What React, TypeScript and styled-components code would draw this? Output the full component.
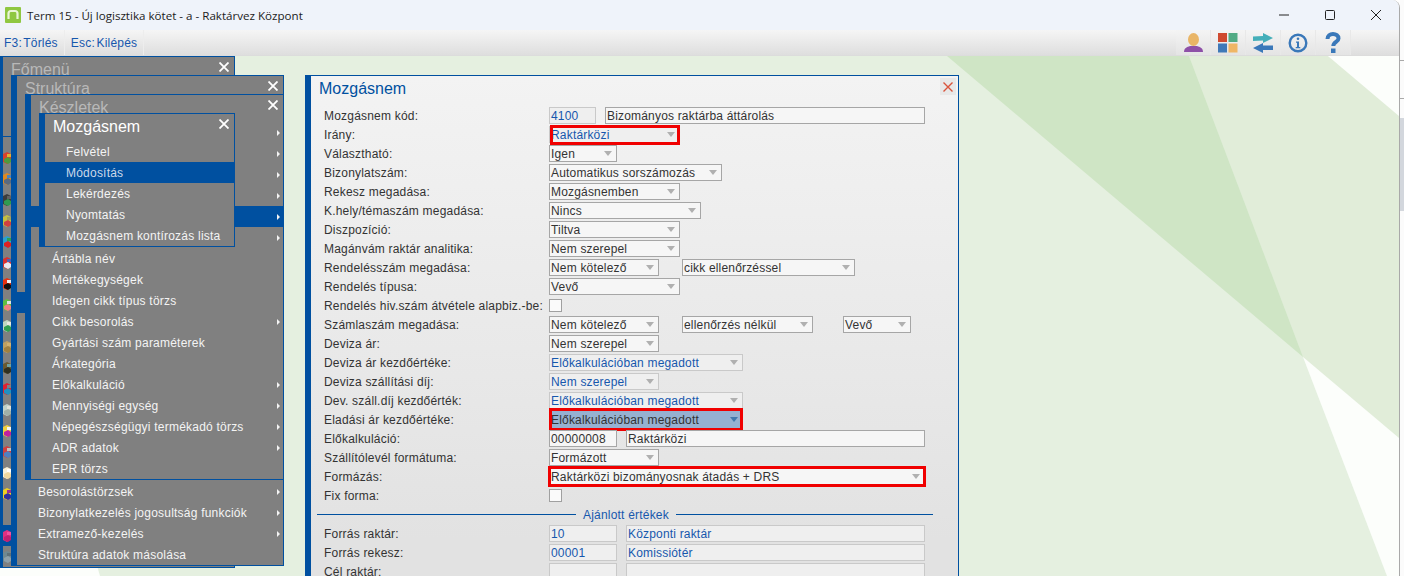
import React from "react";
import styled, { createGlobalStyle } from "styled-components";

const Global = createGlobalStyle`
  html, body { margin: 0; padding: 0; background: #fff; overflow: hidden; }
  * { box-sizing: border-box; }
`;

const BLUE = "#0050a0";

const Page = styled.div`
  display: flex;
  width: 1404px;
  height: 576px;
  overflow: hidden;
  font-family: "Liberation Sans", Arial, sans-serif;
  font-size: 12px;
`;
const AppWindow = styled.div`
  display: flex;
  flex-direction: column;
  width: 1400px;
  height: 576px;
  border-right: 1px solid #a9a9a9;
  border-top-right-radius: 8px;
  overflow: hidden;
`;
const SideStrip = styled.div`
  position: relative;
  flex: 1;
  background: #fbfbfb;
`;
const StripThumb = styled.div`
  position: absolute;
  top: 118px;
  left: 0;
  right: 0;
  height: 93px;
  background: #d3d7dd;
`;
const StripLine = styled.div<{ $top: number }>`
  position: absolute;
  top: ${(p) => p.$top}px;
  left: 0;
  right: 0;
  height: 1px;
  background: #a9a9a9;
`;
const TitleBar = styled.div`
  display: flex;
  align-items: center;
  height: 30px;
  flex: none;
  padding-left: 5px;
  background: #eff3fa;
`;
const TitleText = styled.div`
  margin-left: 6px;
  flex: 1;
  font-family: "Open Sans", sans-serif;
  font-size: 11.6px;
  color: #1c1c1c;
  white-space: nowrap;
`;
const WinButton = styled.div`
  display: flex;
  align-items: center;
  justify-content: center;
  width: 46px;
  height: 30px;
`;
const ToolBar = styled.div`
  display: flex;
  align-items: stretch;
  height: 26px;
  flex: none;
  background: linear-gradient(#f5f5f5, #dedede);
  border-bottom: 1px solid #dcdcdc;
`;
const KeyButton = styled.div<{ $left: number; $right: number }>`
  display: flex;
  align-items: center;
  height: 25px;
  padding: 0 ${(p) => p.$right}px 0 ${(p) => p.$left}px;
  color: #1657ad;
  letter-spacing: 0.2px;
  word-spacing: -2px;
  border-right: 1px solid #ededed;
  white-space: nowrap;
`;
const ToolSpacer = styled.div`
  flex: 1;
`;
const IconButton = styled.div`
  display: flex;
  align-items: center;
  justify-content: center;
  width: 35px;
  height: 25px;
  background: linear-gradient(#f4f4f4, #e4e4e4);
  border-right: 1px solid #e8e8e8;
`;
const ToolEnd = styled.div`
  width: 48px;
`;
const Desktop = styled.div`
  position: relative;
  flex: 1;
  overflow: hidden;
`;
const Backdrop = styled.svg`
  position: absolute;
  inset: 0;
`;

type WinProps = { $x: number; $y: number; $w: number; $h: number };
const MenuWin = styled.div<WinProps>`
  position: absolute;
  left: ${(p) => p.$x}px;
  top: ${(p) => p.$y}px;
  width: ${(p) => p.$w}px;
  height: ${(p) => p.$h}px;
  background: #808080;
  border-top: 1px solid ${BLUE};
  border-right: 1px solid ${BLUE};
  border-bottom: 1px solid ${BLUE};
  border-left: ${(p) => (p.$x === 0 ? 3 : 6)}px solid ${BLUE};
  overflow: hidden;
`;
const MenuHead = styled.div<{ $active?: boolean; $left: number; $h: number }>`
  display: flex;
  justify-content: space-between;
  height: ${(p) => p.$h}px;
  padding-left: ${(p) => p.$left}px;
  font-size: 16px;
  line-height: 25px;
  color: ${(p) => (p.$active ? "#ffffff" : "#b8b8b8")};
`;
const CloseMark = styled.svg<{ $right: number; $top: number }>`
  margin: ${(p) => p.$top}px ${(p) => p.$right}px 0 0;
  flex: none;
`;
const MenuRow = styled.div<{ $selected?: boolean; $left: number }>`
  display: flex;
  align-items: center;
  justify-content: space-between;
  height: 21px;
  padding: 0 3px 0 ${(p) => p.$left}px;
  letter-spacing: 0.22px;
  white-space: nowrap;
  color: ${(p) => (p.$selected ? "#cbd8ea" : "#f4f4f4")};
  background: ${(p) => (p.$selected ? BLUE : "transparent")};
`;
const Chevron = styled.span`
  width: 0;
  height: 0;
  border-left: 3px solid #f4f4f4;
  border-top: 3px solid transparent;
  border-bottom: 3px solid transparent;
`;
const IconColumn = styled.div`
  display: flex;
  flex-direction: column;
  padding-top: 64px;
  width: 8px;
`;
const IconRow = styled.div<{ $selected?: boolean }>`
  display: flex;
  align-items: center;
  height: 21px;
  margin-left: ${(p) => (p.$selected ? -3 : 0)}px;
  padding-left: ${(p) => (p.$selected ? 3 : 0)}px;
  width: ${(p) => (p.$selected ? 11 : 8)}px;
  background: ${(p) => (p.$selected ? BLUE : "transparent")};
`;
const HeadRule = styled.div`
  position: absolute;
  left: 0;
  top: 79px;
  width: 8px;
  height: 1px;
  background: ${BLUE};
`;

const Panel = styled.div`
  position: absolute;
  left: 305px;
  top: 19px;
  width: 654px;
  height: 540px;
  background: linear-gradient(#f3f3f3, #e2e2e2 86%);
  border-top: 1px solid ${BLUE};
  border-right: 1px solid ${BLUE};
  border-left: 6px solid ${BLUE};
`;
const PanelHead = styled.div`
  display: flex;
  justify-content: space-between;
  height: 30px;
  padding-left: 8px;
  font-size: 16px;
  line-height: 25px;
  color: ${BLUE};
`;
const PanelClose = styled.div`
  display: flex;
  align-items: center;
  justify-content: center;
  width: 16px;
  height: 17px;
  margin: 2px 2px 0 0;
  background: #e8e8e8;
`;
const FormBody = styled.div`
  display: flex;
  flex-direction: column;
  padding-left: 13px;
`;
const FormRow = styled.div`
  display: flex;
  align-items: center;
  height: 19px;
  flex: none;
`;
const Label = styled.div`
  width: 225px;
  flex: none;
  color: #333;
  letter-spacing: 0.2px;
  white-space: nowrap;
`;
type BoxProps = { $w: number; $ml?: number; $ro?: boolean };
const BoxBase = styled.div<BoxProps>`
  position: relative;
  display: flex;
  align-items: center;
  flex: none;
  width: ${(p) => p.$w}px;
  height: 17px;
  margin-left: ${(p) => p.$ml ?? 0}px;
  padding-left: 1px;
  letter-spacing: 0.18px;
  white-space: nowrap;
  color: ${(p) => (p.$ro ? "#1657ad" : "#333")};
  background: ${(p) => (p.$ro ? "#efefef" : "#f6f6f6")};
  border: 1px solid ${(p) => (p.$ro ? "#c9c9c9" : "#a6a6a6")};
`;
const Caret = styled.span<{ $active?: boolean }>`
  position: absolute;
  right: 4px;
  top: 5px;
  width: 0;
  height: 0;
  border-left: 4px solid transparent;
  border-right: 4px solid transparent;
  border-top: 5px solid ${(p) => (p.$active ? "#4479ad" : "#b0b0b0")};
`;
const Highlight = styled.span`
  position: absolute;
  inset: -1px;
  left: 1px;
  right: 1px;
  background: #96b1d1;
`;
const BoxText = styled.span`
  position: relative;
`;
const RedMark = styled.span<{ $inset: string }>`
  position: absolute;
  inset: ${(p) => p.$inset};
  border: 3px solid #f00000;
  pointer-events: none;
`;
const Check = styled.div`
  width: 13px;
  height: 13px;
  background: #fafafa;
  border: 1px solid #a0a0a0;
`;
const Divider = styled.div`
  display: flex;
  align-items: center;
  gap: 7px;
  height: 19px;
  margin-left: -7px;
  width: 616px;
  flex: none;
  color: #1657ad;
  letter-spacing: 0.2px;
  white-space: nowrap;
`;
const DividerLine = styled.div<{ $w?: number }>`
  flex: ${(p) => (p.$w ? `0 0 ${p.$w}px` : "1")};
  height: 1px;
  background: ${BLUE};
`;

const X = ({ right, top }: { right: number; top: number }) => (
  <CloseMark $right={right} $top={top} width="10" height="10" viewBox="0 0 10 10">
    <path d="M0.5 0.5 9.5 9.5M9.5 0.5 0.5 9.5" stroke="#fff" strokeWidth="1.8" />
  </CloseMark>
);

type Ctl =
  | { t: "sel"; v: string; w: number; ml?: number; ro?: boolean; mark?: string; hi?: boolean }
  | { t: "txt"; v: string; w: number; ml?: number; ro?: boolean }
  | { t: "chk" };

const Control = ({ c }: { c: Ctl }) => {
  if (c.t === "chk") return <Check />;
  if (c.t === "txt")
    return (
      <BoxBase $w={c.w} $ml={c.ml} $ro={c.ro}>
        {c.v}
      </BoxBase>
    );
  return (
    <BoxBase $w={c.w} $ml={c.ml} $ro={c.ro}>
      {c.hi && <Highlight />}
      <BoxText>{c.v}</BoxText>
      <Caret $active={c.hi} />
      {c.mark && <RedMark $inset={c.mark} />}
    </BoxBase>
  );
};

const sel = (v: string, w: number, ml?: number): Ctl => ({ t: "sel", v, w, ml });
const ro = (v: string, w: number): Ctl => ({ t: "sel", v, w, ro: true });

const rowsA: { l: string; c: Ctl[] }[] = [
  { l: "Mozgásnem kód:", c: [{ t: "txt", v: "4100", w: 47, ro: true }, { t: "txt", v: "Bizományos raktárba áttárolás", w: 320, ml: 9 }] },
  { l: "Irány:", c: [{ t: "sel", v: "Raktárközi", w: 131, ro: true, mark: "-2px -1px -3px 0" }] },
  { l: "Választható:", c: [sel("Igen", 68)] },
  { l: "Bizonylatszám:", c: [sel("Automatikus sorszámozás", 173)] },
  { l: "Rekesz megadása:", c: [sel("Mozgásnemben", 131)] },
  { l: "K.hely/témaszám megadása:", c: [sel("Nincs", 152)] },
  { l: "Diszpozíció:", c: [sel("Tiltva", 131)] },
  { l: "Magánvám raktár analitika:", c: [sel("Nem szerepel", 131)] },
  { l: "Rendelésszám megadása:", c: [sel("Nem kötelező", 110), sel("cikk ellenőrzéssel", 173, 23)] },
  { l: "Rendelés típusa:", c: [sel("Vevő", 131)] },
  { l: "Rendelés hiv.szám átvétele alapbiz.-be:", c: [{ t: "chk" }] },
  { l: "Számlaszám megadása:", c: [sel("Nem kötelező", 110), sel("ellenőrzés nélkül", 131, 23), sel("Vevő", 68, 30)] },
  { l: "Deviza ár:", c: [sel("Nem szerepel", 110)] },
  { l: "Deviza ár kezdőértéke:", c: [ro("Előkalkulációban megadott", 194)] },
  { l: "Deviza szállítási díj:", c: [ro("Nem szerepel", 110)] },
  { l: "Dev. száll.díj kezdőérték:", c: [ro("Előkalkulációban megadott", 194)] },
  { l: "Eladási ár kezdőértéke:", c: [{ t: "sel", v: "Előkalkulációban megadott", w: 194, hi: true, mark: "-4px -1px -4px -1px" }] },
  { l: "Előkalkuláció:", c: [{ t: "txt", v: "00000008", w: 68 }, { t: "txt", v: "Raktárközi", w: 299, ml: 9 }] },
  { l: "Szállítólevél formátuma:", c: [sel("Formázott", 110)] },
  { l: "Formázás:", c: [{ t: "sel", v: "Raktárközi bizományosnak átadás + DRS", w: 376, mark: "-3px -2px -3px -2px" }] },
  { l: "Fix forma:", c: [{ t: "chk" }] },
];
const rowsB: { l: string; c: Ctl[] }[] = [
  { l: "Forrás raktár:", c: [{ t: "txt", v: "10", w: 68, ro: true }, { t: "txt", v: "Központi raktár", w: 299, ml: 9, ro: true }] },
  { l: "Forrás rekesz:", c: [{ t: "txt", v: "00001", w: 68, ro: true }, { t: "txt", v: "Komissiótér", w: 299, ml: 9, ro: true }] },
  { l: "Cél raktár:", c: [{ t: "txt", v: "", w: 68, ro: true }, { t: "txt", v: "", w: 299, ml: 9, ro: true }] },
];

type Item = { l: string; a?: boolean; s?: boolean };
const keszletek: Item[] = [
  { l: "", a: true }, { l: "", a: true }, { l: "", a: true }, { l: "", a: true },
  { l: "", a: true, s: true }, { l: "", a: true },
  { l: "Ártábla név" }, { l: "Mértékegységek" }, { l: "Idegen cikk típus törzs" },
  { l: "Cikk besorolás", a: true }, { l: "Gyártási szám paraméterek" }, { l: "Árkategória" },
  { l: "Előkalkuláció", a: true }, { l: "Mennyiségi egység", a: true },
  { l: "Népegészségügyi termékadó törzs", a: true }, { l: "ADR adatok", a: true }, { l: "EPR törzs" },
];
const struktura: Item[] = [
  ...Array.from({ length: 8 }, () => ({ l: "" })),
  { l: "", s: true },
  ...Array.from({ length: 8 }, () => ({ l: "" })),
  { l: "Besorolástörzsek", a: true },
  { l: "Bizonylatkezelés jogosultság funkciók", a: true },
  { l: "Extramező-kezelés", a: true },
  { l: "Struktúra adatok másolása" },
];
const mozgas: Item[] = [
  { l: "Felvétel" }, { l: "Módosítás", s: true }, { l: "Lekérdezés" }, { l: "Nyomtatás" },
  { l: "Mozgásnem kontírozás lista" },
];

const Menu = ({ items, left }: { items: Item[]; left: number }) => (
  <>
    {items.map((it, i) => (
      <MenuRow key={i} $selected={it.s} $left={left}>
        <span>{it.l}</span>
        {it.a && <Chevron />}
      </MenuRow>
    ))}
  </>
);

const iconColors: ([string, string, string] | null)[] = [
  ["#d8402c", "#4f9a3c", "#e0b030"],
  ["#e08a20", "#5a6a80", "#4a84c0"],
  ["#3c3c3c", "#2f9a50", "#606060"],
  ["#c4c040", "#d04040", "#a0a060"],
  ["#2aa0d0", "#e02020", "#30a050"],
  ["#d83030", "#e8e8f0", "#5060b0"],
  ["#e83010", "#111111", "#f0f0f0"],
  ["#60c040", "#f08080", "#e0e0e0"],
  ["#c0d8c0", "#30a050", "#e8e8e0"],
  ["#c0a060", "#a08040", "#d0b070"],
  ["#6a5a30", "#303020", "#70a0a0"],
  ["#e02030", "#2090c0", "#808080"],
  ["#c0d0c8", "#a0b0a8", "#e0e0d8"],
  ["#f0d040", "#c020a0", "#f4f4f4"],
  ["#d04040", "#5080c0", "#c0c0c0"],
  ["#f8f0d8", "#f0d8a0", "#ffffff"],
  ["#f0d020", "#3030a0", "#a03090"],
  null,
  ["#e03080", "#c02070", "#f050a0"],
  ["#708890", "#90a0a8", "#607078"],
];

const TinyIcon = ({ c }: { c: [string, string, string] }) => (
  <svg width="8" height="14" viewBox="0 0 8 14">
    <path d="M0 3 4 1l4 2v7l-4 3-4-2z" fill={c[0]} />
    <path d="M1 8l4-2 3 2v3l-3 2-4-2z" fill={c[1]} />
    <rect x="4" y="3" width="4" height="3" fill={c[2]} />
  </svg>
);

export default function App() {
  return (
    <Page>
      <Global />
      <AppWindow>
        <TitleBar>
          <svg width="16" height="16" viewBox="0 0 16 16">
            <rect width="16" height="16" rx="1" fill="#8fc742" />
            <path d="M3.500 12V6.500a2.500 2.500 0 0 1 2.500-2.500h4a2.500 2.500 0 0 1 2.500 2.500V12" fill="none" stroke="#eaf5d8" strokeWidth="2.200" />
          </svg>
          <TitleText>Term 15 - Új logisztika kötet - a - Raktárvez Központ</TitleText>
          <WinButton>
            <svg width="10" height="10" viewBox="0 0 10 10"><path d="M0 5h10" stroke="#222" /></svg>
          </WinButton>
          <WinButton>
            <svg width="10" height="10" viewBox="0 0 10 10"><rect x=".5" y=".5" width="9" height="9" rx="1" fill="none" stroke="#222" /></svg>
          </WinButton>
          <WinButton>
            <svg width="10" height="10" viewBox="0 0 10 10"><path d="M0 0l10 10M10 0 0 10" stroke="#222" /></svg>
          </WinButton>
        </TitleBar>
        <ToolBar>
          <KeyButton $left={4} $right={6}>F3: Törlés</KeyButton>
          <KeyButton $left={6} $right={6}>Esc: Kilépés</KeyButton>
          <ToolSpacer />
          <IconButton>
            <svg width="21" height="21" viewBox="0 0 21 21">
              <path d="M1 20c0-4 3-5 6-6h7c3 1 6 2 6 6z" fill="#8e50a8" />
              <ellipse cx="10.500" cy="7.500" rx="5.500" ry="6.500" fill="#e9b566" />
            </svg>
          </IconButton>
          <IconButton>
            <svg width="20" height="20" viewBox="0 0 20 20">
              <rect x="0" y="0" width="9" height="9" fill="#cf4a2f" />
              <rect x="10.500" y="0" width="9" height="9" fill="#52ab84" />
              <rect x="0" y="10.500" width="9" height="9" fill="#3f79b8" />
              <rect x="10.500" y="10.500" width="9" height="9" fill="#efb665" />
            </svg>
          </IconButton>
          <IconButton>
            <svg width="20" height="20" viewBox="0 0 20 20">
              <path d="M0 3.500 10 3V0l10 5-10 5V7.500L0 8z" fill="#45afb9" />
              <path d="M0 15l10-5v2.500h10V17H10v3z" fill="#3a78b9" />
            </svg>
          </IconButton>
          <IconButton>
            <svg width="20" height="20" viewBox="0 0 20 20">
              <circle cx="10" cy="10" r="8.300" fill="none" stroke="#3a78b9" strokeWidth="2.400" />
              <circle cx="10" cy="5.800" r="1.300" fill="#3a78b9" />
              <path d="M8 8.500h3v5.500h1.300v1.200H7.700V14H9V9.700H8z" fill="#3a78b9" />
            </svg>
          </IconButton>
          <IconButton>
            <svg width="16" height="21" viewBox="0 0 16 21">
              <path d="M2.500 7C2.500 3.500 5 2 8 2s5.500 1.500 5.500 4.500c0 3.500-5.200 3.500-5.200 7.500" fill="none" stroke="#3a78b9" strokeWidth="4" />
              <rect x="6" y="16.500" width="4.500" height="4.500" fill="#3a78b9" />
            </svg>
          </IconButton>
          <ToolEnd />
        </ToolBar>
        <Desktop>
          <Backdrop width="1399" height="520" viewBox="0 56 1399 520">
            <rect x="0" y="56" width="1399" height="520" fill="#e5f0e0" />
            <polygon points="1189,56 1328,56 1399,116 1399,438 1303,357" fill="#e1edd9" />
            <polygon points="947,56 1189,56 1303,357" fill="#cfe5c5" />
            <polygon points="1328,56 1399,56 1399,116" fill="#fcfefb" />
            <polygon points="1303,357 1399,438 1399,576 1387,576" fill="#fcfefb" />
            <polygon points="0,500 78,500 100,576 0,576" fill="#fcfefb" />
          </Backdrop>

          <MenuWin $x={0} $y={0} $w={235} $h={512}>
            <HeadRule />
            <MenuHead $left={8} $h={26}>
              Főmenü
              <X right={5} top={5} />
            </MenuHead>
            <IconColumn>
              {iconColors.map((c, i) => (
                <IconRow key={i} $selected={i === 18}>
                  {c && <TinyIcon c={c} />}
                </IconRow>
              ))}
            </IconColumn>
          </MenuWin>

          <MenuWin $x={11} $y={19} $w={273} $h={491}>
            <MenuHead $left={8} $h={48}>
              Struktúra
              <X right={5} top={5} />
            </MenuHead>
            <Menu items={struktura} left={21} />
          </MenuWin>

          <MenuWin $x={25} $y={38} $w={259} $h={386}>
            <MenuHead $left={8} $h={27}>
              Készletek
              <X right={5} top={5} />
            </MenuHead>
            <Menu items={keszletek} left={21} />
          </MenuWin>

          <MenuWin $x={39} $y={57} $w={196} $h={134}>
            <MenuHead $active $left={8} $h={27}>
              Mozgásnem
              <X right={5} top={5} />
            </MenuHead>
            <Menu items={mozgas} left={21} />
          </MenuWin>

          <Panel>
            <PanelHead>
              Mozgásnem
              <PanelClose>
                <svg width="10" height="10" viewBox="0 0 10 10">
                  <path d="M.5.5l9 9M9.500.5l-9 9" stroke="#d9533b" strokeWidth="1.400" />
                </svg>
              </PanelClose>
            </PanelHead>
            <FormBody>
              {rowsA.map((r) => (
                <FormRow key={r.l}>
                  <Label>{r.l}</Label>
                  {r.c.map((c, i) => <Control key={i} c={c} />)}
                </FormRow>
              ))}
              <Divider>
                <DividerLine $w={259} />
                Ajánlott értékek
                <DividerLine />
              </Divider>
              {rowsB.map((r) => (
                <FormRow key={r.l}>
                  <Label>{r.l}</Label>
                  {r.c.map((c, i) => <Control key={i} c={c} />)}
                </FormRow>
              ))}
            </FormBody>
          </Panel>
        </Desktop>
      </AppWindow>
      <SideStrip>
        <StripLine $top={60} />
        <StripLine $top={98} />
        <StripThumb />
      </SideStrip>
    </Page>
  );
}
